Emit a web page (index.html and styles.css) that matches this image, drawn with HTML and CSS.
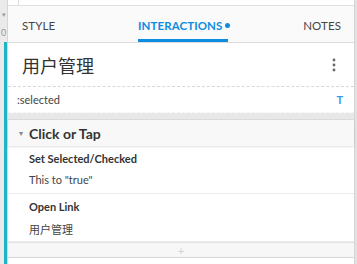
FILE: index.html
```html
<!DOCTYPE html>
<html lang="en">
<head>
  <meta charset="UTF-8" />
  <title>Interactions</title>
  <link rel="stylesheet" href="styles.css">
</head>
<body>
  <div class="gutter">
    <div class="gutter-top">
      <span class="caret">▾</span>
      <span class="num">0</span>
    </div>
    <div class="gutter-bar"></div>
  </div>

  <div class="panel">
    <div class="topstrip"><span class="tick"></span></div>

    <div class="tabs">
      <div class="tab">STYLE</div>
      <div class="tab active">INTERACTIONS<span class="dot"></span></div>
      <div class="tab">NOTES</div>
    </div>

    <div class="title-row">
      <h2 class="title">用户管理</h2>
      <svg class="kebab" width="4" height="14" viewBox="0 0 4 14">
        <circle cx="2" cy="2" r="1.4" fill="#666" />
        <circle cx="2" cy="7" r="1.4" fill="#666" />
        <circle cx="2" cy="12" r="1.4" fill="#666" />
      </svg>
    </div>

    <div class="state-row">
      <span class="state">:selected</span>
      <span class="state-icon">T</span>
    </div>
    <div class="state-gap"></div>

    <div class="event">
      <span class="event-caret">▾</span>
      <span class="event-name">Click or Tap</span>
    </div>

    <div class="action">
      <div class="action-name">Set Selected/Checked</div>
      <div class="action-desc">This to "true"</div>
    </div>
    <div class="action">
      <div class="action-name">Open Link</div>
      <div class="action-desc">用户管理</div>
    </div>

    <div class="add-row">+</div>
  </div>
</body>
</html>
```

FILE: styles.css
```css
* {
  box-sizing: border-box;
}
body {
  margin: 0;
  height: 264px;
  overflow: hidden;
  display: flex;
  background: #e2e2e2;
  font-family: 'Lato', 'Noto Sans CJK SC', sans-serif;
  color: #333;
}
.gutter {
  width: 8px;
  display: flex;
  flex-direction: column;
  background: #eaeaea;
  border-right: 1px solid #d6d6d6;
}
.gutter-top {
  height: 42px;
  display: flex;
  flex-direction: column;
  align-items: center;
  color: #999;
  line-height: 1;
}
.caret {
  margin-top: 11px;
  font-size: 7px;
}
.num {
  margin-top: 10px;
  font-size: 9px;
  color: #999;
}
.gutter-bar {
  flex: 1;
  margin-left: 4px;
  background: #1eb4c6;
}
.panel {
  width: 347px;
  display: flex;
  flex-direction: column;
  background: #fff;
  border-right: 1px solid #d4d4d4;
}
.topstrip {
  height: 6px;
  border-bottom: 1px solid #e0e0e0;
  position: relative;
}
.tick {
  position: absolute;
  left: 10px;
  top: 0;
  height: 5px;
  border-left: 1px solid #e0e0e0;
}
.tabs {
  height: 37px;
  display: flex;
  justify-content: space-between;
  align-items: stretch;
  padding: 0 13px 0 14px;
  background: #fafafa;
  border-bottom: 1px solid #dcdcdc;
}
.tab {
  display: flex;
  align-items: center;
  padding-top: 5px;
  font-size: 11.5px;
  color: #444;
  letter-spacing: 0.1px;
  border-bottom: 3px solid transparent;
}
.tab.active {
  color: #0e8ce0;
  font-weight: bold;
  border-bottom-color: #0e8ce0;
  margin-left: 8px;
  padding-right: 6px;
  position: relative;
}
.dot {
  position: absolute;
  right: -2px;
  top: 17px;
  width: 5px;
  height: 5px;
  border-radius: 50%;
  background: #0e8ce0;
}
.title-row {
  height: 44px;
  display: flex;
  align-items: center;
  justify-content: space-between;
  padding: 0 18px 0 14px;
  border-bottom: 1px dashed #d8d8d8;
}
.title {
  margin: 0;
  font-size: 18px;
  font-weight: normal;
  color: #333;
}
.state-row {
  height: 26px;
  display: flex;
  align-items: center;
  justify-content: space-between;
  padding: 0 11px 0 9px;
  font-size: 11px;
  color: #444;
  border-bottom: 1px dashed #f4f4f4;
}
.state-icon {
  color: #3399f3;
  font-weight: bold;
  font-size: 11px;
}
.state-gap {
  height: 7px;
  background: #e8e8e8;
  border-bottom: 1px solid #dcdcdc;
}
.event {
  height: 26px;
  display: flex;
  align-items: center;
  padding-left: 11px;
  background: #f8f8f8;
  box-shadow: 0 1px 2px rgba(0, 0, 0, 0.12);
  position: relative;
}
.event-caret {
  font-size: 8px;
  color: #888;
  width: 10px;
}
.event-name {
  font-size: 14px;
  font-weight: bold;
  color: #333;
}
.action {
  padding: 0 0 0 21px;
  border-bottom: 1px solid #ebebeb;
}
.action-name {
  height: 24px;
  padding-top: 6px;
  font-size: 11px;
  font-weight: bold;
  color: #333;
}
.action-desc {
  height: 23px;
  font-size: 11px;
  color: #444;
  padding-top: 3px;
}
.action:last-of-type {
  border-bottom: none;
}
.add-row {
  height: 16px;
  text-align: center;
  font-size: 12px;
  line-height: 16px;
  color: #d4d4d4;
  background: #f7f7f7;
  border-top: 1px solid #e4e4e4;
  border-bottom: 1px solid #d8d8d8;
}
```
